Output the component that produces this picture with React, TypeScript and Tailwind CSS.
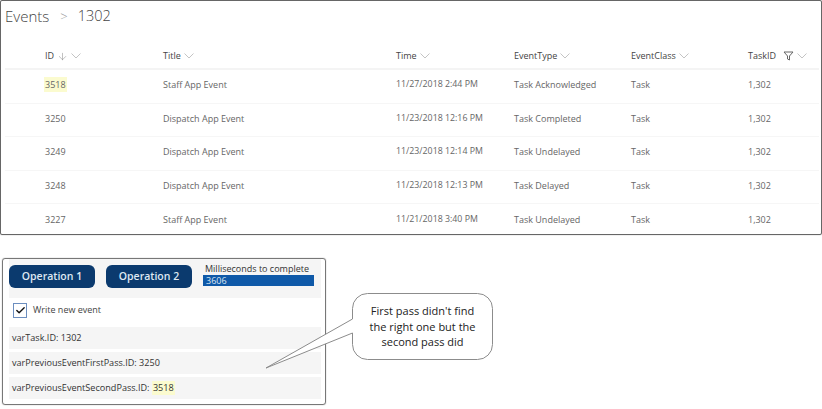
import { ArrowDown, Check } from "lucide-react";

const rows = [
  ["3518", "Staff App Event", "11/27/2018 2:44 PM", "Task Acknowledged"],
  ["3250", "Dispatch App Event", "11/23/2018 12:16 PM", "Task Completed"],
  ["3249", "Dispatch App Event", "11/23/2018 12:14 PM", "Task Undelayed"],
  ["3248", "Dispatch App Event", "11/23/2018 12:13 PM", "Task Delayed"],
  ["3227", "Staff App Event", "11/21/2018 3:40 PM", "Task Undelayed"],
];

const gridCols = "grid grid-cols-[118px_233px_118px_117px_117px_1fr] pl-[40px] items-center";

function Caret() {
  return (
    <svg className="ml-[3px]" width="10" height="6" viewBox="0 0 10 6" fill="none" stroke="#c4c4c4" strokeWidth="1">
      <path d="M0.5 0.5L5 5l4.500-4.500" />
    </svg>
  );
}

function Heading({ label }: { label: string }) {
  return (
    <div className="flex items-center text-[#444]">
      {label}
      <Caret />
    </div>
  );
}

export default function App() {
  return (
    <div className="relative w-[822px] h-[409px] overflow-hidden bg-white font-['Open_Sans',sans-serif]">
      <section className="h-[235px] border border-[#666] rounded-[2px] shadow-[0_0_1px_#666]">
        <div className="flex items-center h-[34px] pl-[4px] pb-[3px] text-[15px] font-light leading-none text-[#444]">
          <span>Events</span>
          <span className="ml-[11px] text-[13px] text-[#999]">&gt;</span>
          <span className="ml-[10px] text-[14.5px]">1302</span>
        </div>
        <div className="ml-[4px] mr-[2px] text-[9px]">
          <div className={`${gridCols} h-[35px] pt-[9px] border-b-2 border-[#f4f4f4]`}>
            <div className="flex items-center text-[#444]">
              ID
              <ArrowDown className="ml-[3px] text-[#777]" size={11} strokeWidth={1} />
              <Caret />
            </div>
            <Heading label="Title" />
            <Heading label="Time" />
            <Heading label="EventType" />
            <Heading label="EventClass" />
            <div className="flex items-center text-[#444]">
              TaskID
              <svg className="ml-[7px]" width="11" height="10" viewBox="0 0 11 10" fill="none" stroke="#666" strokeWidth="1">
                <path d="M1 1h9L6.5 5v4l-2-1V5z" />
              </svg>
              <Caret />
            </div>
          </div>
          {rows.map((row, i) => (
            <div key={row[0]} className={`${gridCols} h-[33.5px] pb-[3px] text-[#666] border-b border-[#f6f6f6] last:border-b-0`}>
              <div>
                <span className={i === 0 ? "bg-[#fbfbcf] px-[1px] -mx-[1px] py-[1px]" : ""}>{row[0]}</span>
              </div>
              <div>{row[1]}</div>
              <div className="text-[8.8px]">{row[2]}</div>
              <div>{row[3]}</div>
              <div>Task</div>
              <div>1,302</div>
            </div>
          ))}
        </div>
      </section>

      <section className="mt-[23px] ml-[2px] w-[324px] h-[147px] border border-[#777] rounded-[3px] shadow-[0_0_1px_#777] px-[6px] pb-[4px]">
        <div className="flex h-[39px] bg-[#f5f5f5] pt-[6px] w-[312px]">
          <button className="w-[86px] h-[23px] bg-[#0b3a6e] rounded-[6px] text-[#dfe8f2] text-[10.5px] font-semibold">Operation 1</button>
          <button className="ml-[11px] w-[86px] h-[23px] bg-[#0b3a6e] rounded-[6px] text-[#dfe8f2] text-[10.5px] font-semibold">Operation 2</button>
          <div className="ml-[11px] w-[111px] -mt-[3px]">
            <div className="text-[9px] leading-[13px] pl-[2px] text-[#333] whitespace-nowrap">Milliseconds to complete</div>
            <div className="h-[11px] bg-[#0f59a8] text-[#dbe6f2] text-[9px] leading-[11px] pl-[3px]">3606</div>
          </div>
        </div>
        <div className="flex items-center h-[24px] mb-[5px] pl-[4px] text-[9px] text-[#444]">
          <span className="flex items-center justify-center w-[14px] h-[15px] border border-[#6c8ebf] bg-white">
            <Check size={11} strokeWidth={3} className="text-[#111]" />
          </span>
          <span className="ml-[6px]">Write new event</span>
        </div>
        <div className="flex flex-col gap-[3px] w-[312px] text-[9.1px] text-[#333]">
          <div className="flex items-center h-[22px] bg-[#f5f5f5] pl-[3px]">varTask.ID: 1302</div>
          <div className="flex items-center h-[22px] bg-[#f5f5f5] pl-[3px]">varPreviousEventFirstPass.ID: 3250</div>
          <div className="flex items-center h-[22px] bg-[#f5f5f5] pl-[3px]">
            varPreviousEventSecondPass.ID:&nbsp;<span className="bg-[#fbfbcf] px-[1px]">3518</span>
          </div>
        </div>
      </section>

      <svg className="absolute left-[260px] top-[285px]" width="240" height="90" viewBox="0 0 240 90" fill="#fff" stroke="#8c8c8c" strokeWidth="1">
        <path d="M107.500 8.500h110a15 15 0 0 1 15 15v36a15 15 0 0 1-15 15h-110a15 15 0 0 1-15-15V48L6 83l86.500-49V23.500a15 15 0 0 1 15-15z" />
      </svg>
      <div className="absolute left-[352px] top-[293px] w-[141px] h-[67px] flex items-center justify-center text-center text-[11px] leading-[15.5px] font-medium text-[#222]">
        First pass didn't find
        <br />
        the right one but the
        <br />
        second pass did
      </div>
    </div>
  );
}
